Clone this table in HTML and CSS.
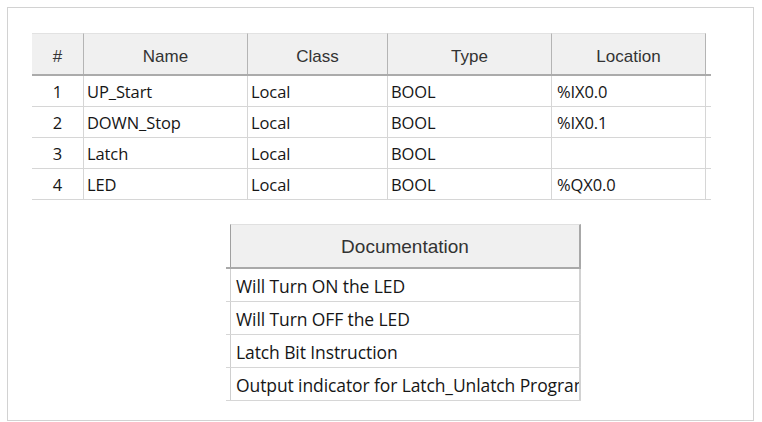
FILE: index.html
```html
<!DOCTYPE html>
<html>
<head>
<meta charset="utf-8">
<link rel="stylesheet" href="styles.css">
</head>
<body>
<div class="frame">
  <div class="vars">
    <div class="row head">
      <div class="cell">#</div>
      <div class="cell">Name</div>
      <div class="cell">Class</div>
      <div class="cell">Type</div>
      <div class="cell">Location</div>
      <div class="cell pad"></div>
    </div>
    <div class="row">
      <div class="cell num">1</div>
      <div class="cell">UP_Start</div>
      <div class="cell">Local</div>
      <div class="cell">BOOL</div>
      <div class="cell loc">%IX0.0</div>
      <div class="cell pad"></div>
    </div>
    <div class="row">
      <div class="cell num">2</div>
      <div class="cell">DOWN_Stop</div>
      <div class="cell">Local</div>
      <div class="cell">BOOL</div>
      <div class="cell loc">%IX0.1</div>
      <div class="cell pad"></div>
    </div>
    <div class="row">
      <div class="cell num">3</div>
      <div class="cell">Latch</div>
      <div class="cell">Local</div>
      <div class="cell">BOOL</div>
      <div class="cell loc"></div>
      <div class="cell pad"></div>
    </div>
    <div class="row">
      <div class="cell num">4</div>
      <div class="cell">LED</div>
      <div class="cell">Local</div>
      <div class="cell">BOOL</div>
      <div class="cell loc">%QX0.0</div>
      <div class="cell pad"></div>
    </div>
  </div>
  <div class="docs">
    <div class="drow dhead">
      <div class="strip"></div>
      <div class="dcell">Documentation</div>
    </div>
    <div class="drow">
      <div class="strip"></div>
      <div class="dcell">Will Turn ON the LED</div>
    </div>
    <div class="drow">
      <div class="strip"></div>
      <div class="dcell">Will Turn OFF the LED</div>
    </div>
    <div class="drow">
      <div class="strip"></div>
      <div class="dcell">Latch Bit Instruction</div>
    </div>
    <div class="drow">
      <div class="strip"></div>
      <div class="dcell">Output indicator for Latch_Unlatch Program</div>
    </div>
  </div>
</div>
</body>
</html>
```

FILE: styles.css
```css
html, body {
  margin: 0;
  padding: 0;
  background: #ffffff;
}

.frame {
  box-sizing: border-box;
  margin: 7px 0 0 7px;
  width: 747px;
  height: 414px;
  border: 1px solid #d2d2d2;
  padding: 25px 0 0 24px;
}

/* ---------- variables table ---------- */
.vars {
  width: 679px;
}

.row {
  display: grid;
  grid-template-columns: 52px 164px 140px 164px 154px 5px;
  height: 31px;
  box-sizing: border-box;
  border-bottom: 1px solid #d6d6d6;
}

.cell {
  box-sizing: border-box;
  border-right: 1px solid #d6d6d6;
  padding: 1px 0 0 3px;
  display: flex;
  align-items: center;
  font-family: "Open Sans", "Noto Sans", sans-serif;
  font-size: 16.5px;
  letter-spacing: -0.1px;
  color: #161616;
  white-space: nowrap;
  overflow: hidden;
}

.cell.num {
  justify-content: center;
  padding-left: 0;
}

.cell.loc {
  padding-left: 5px;
}

.cell.pad {
  border-right: none;
}

.row.head {
  height: 43px;
  border-bottom: 2px solid #ababab;
}

.row.head .cell {
  background: #f0f0f0;
  border-top: 1px solid #e2e2e2;
  border-right: 1px solid #b4b4b4;
  justify-content: center;
  padding: 5px 0 0 0;
  font-family: "Liberation Sans", Arial, sans-serif;
  font-size: 17px;
  letter-spacing: 0;
  color: #333333;
}

.row.head .cell.pad {
  background: #ffffff;
  border: none;
}

/* ---------- documentation table ---------- */
.docs {
  margin: 24px 0 0 194px;
  width: 355px;
}

.drow {
  display: grid;
  grid-template-columns: 4px 351px;
  height: 33px;
  box-sizing: border-box;
  border-bottom: 1px solid #d6d6d6;
}

.dcell {
  box-sizing: border-box;
  border-left: 1px solid #cfcfcf;
  border-right: 2px solid #d2d2d2;
  padding: 1px 0 0 5px;
  display: flex;
  align-items: center;
  font-family: "Open Sans", "Noto Sans", sans-serif;
  font-size: 17.5px;
  letter-spacing: -0.1px;
  color: #161616;
  white-space: nowrap;
  overflow: hidden;
}

.drow.dhead {
  height: 45px;
  border-bottom: 2px solid #a9a9a9;
}

.drow.dhead .dcell {
  background: #f0f0f0;
  border-top: 1px solid #e0e0e0;
  border-left: 1px solid #a0a0a0;
  border-right: 2px solid #a8a8a8;
  justify-content: center;
  padding: 2px 0 0 0;
  font-family: "Liberation Sans", Arial, sans-serif;
  font-size: 19px;
  letter-spacing: 0;
  color: #333333;
}
```
